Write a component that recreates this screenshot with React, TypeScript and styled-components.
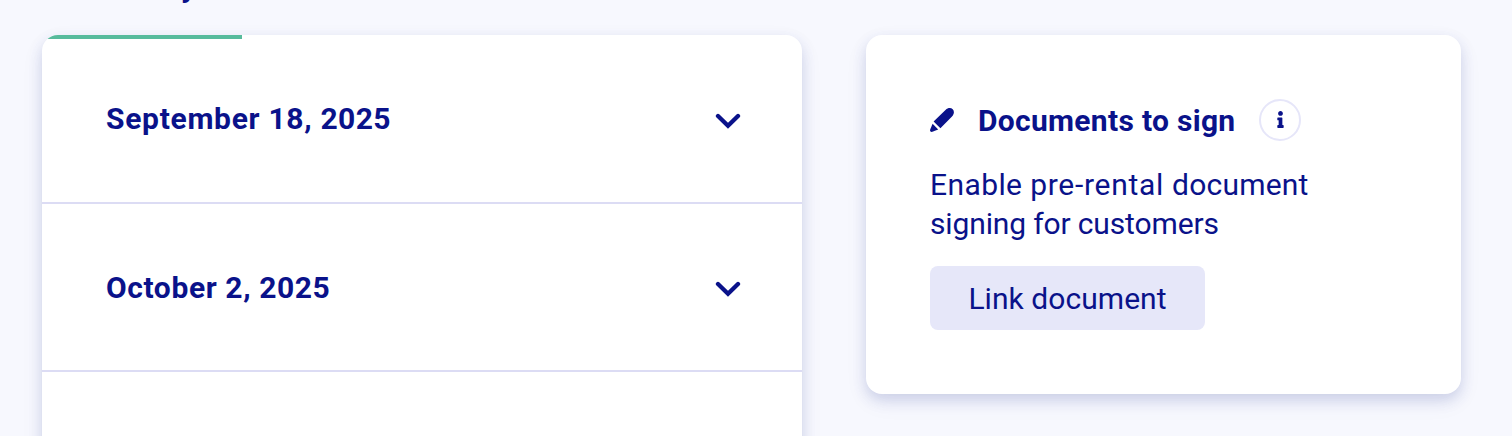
import React from "react";
import styled, { createGlobalStyle } from "styled-components";
import { FaInfo } from "react-icons/fa";

const GlobalStyle = createGlobalStyle`
  * { box-sizing: border-box; }
  html, body { margin: 0; height: 436px; overflow: hidden; background: #f7f8fe; }
  body { font-family: Roboto, "Liberation Sans", sans-serif; color: #0a128a; }
`;

const Page = styled.div`
  width: 1512px;
  height: 436px;
  overflow: hidden;
  display: flex;
  flex-direction: column;
`;

const Heading = styled.div`
  height: 35px;
  flex: none;
  padding-left: 181px;
  font-size: 30px;
  line-height: 36px;
  font-weight: 700;
  margin-top: -31px;
  margin-bottom: 31px;
`;

const Columns = styled.main`
  display: flex;
  align-items: flex-start;
  gap: 64px;
  padding-left: 42px;
`;

const Card = styled.section`
  background: #fff;
  border-radius: 16px;
  box-shadow: 0 8px 24px rgba(10, 18, 138, 0.06), 0 6px 14px rgba(50, 70, 150, 0.17);
`;

const DatesCard = styled(Card)`
  width: 760px;
  height: 560px;
`;

const ProgressClip = styled.div`
  height: 16px;
  margin-bottom: -16px;
  border-radius: 16px 16px 0 0;
  overflow: hidden;
`;

const ProgressBar = styled.div`
  width: 200px;
  height: 4px;
  background: #57bb9c;
`;

const DateRow = styled.div<{ $height: number }>`
  height: ${(p) => p.$height}px;
  display: flex;
  align-items: center;
  justify-content: space-between;
  padding: 0 61px 0 64px;
  border-bottom: 2px solid #dcdcf4;
`;

const Label = styled.span<{ $spacing?: number; $bold?: boolean }>`
  font-size: 30px;
  line-height: 39px;
  white-space: nowrap;
  font-weight: ${(p) => (p.$bold ? 700 : 400)};
  letter-spacing: ${(p) => p.$spacing ?? 0}px;
`;

const Word = styled.span<{ $spacing: number }>`
  letter-spacing: ${(p) => p.$spacing}px;
`;

const SignCard = styled(Card)`
  width: 595px;
  height: 359px;
  padding: 64px;
`;

const SignHeader = styled.header`
  height: 42px;
  display: flex;
  align-items: center;
`;

const TitleBox = styled.div`
  width: 257px;
  margin: 0 24px;
  display: flex;
`;

const InfoButton = styled.button`
  width: 42px;
  height: 42px;
  padding: 0 0 2px;
  display: flex;
  align-items: center;
  justify-content: center;
  border: 2px solid #e6e6f9;
  border-radius: 50%;
  background: #fff;
  color: #0a128a;
`;

const Description = styled.div`
  margin-top: 24px;
  display: flex;
  flex-direction: column;
`;

const LinkButton = styled.button`
  width: 275px;
  height: 64px;
  margin-top: 23px;
  padding: 0;
  border: 0;
  border-radius: 8px;
  background: #e6e7f9;
  color: inherit;
  font-family: inherit;
`;

const ChevronIcon = styled.svg`
  margin-top: 4px;
`;

const Chevron = () => (
  <ChevronIcon width="26" height="16" viewBox="0 0 26 16" fill="none">
    <path
      d="M3 3 L13 12.8 L23 3"
      stroke="#0a128a"
      strokeWidth="4.3"
      strokeLinecap="round"
    />
  </ChevronIcon>
);

const Pencil = () => (
  <svg width="24" height="24" viewBox="0 0 24 24" fill="#0a128a">
    <path d="M3.6 13.6 15.5 2C18-.4 21-.4 22.7 1.3S24.4 6 22 8.5L10.4 20.2Z" />
    <path d="M2.6 15.8 8.2 21.4 2.4 23.8Q-.4 24.4.2 21.6Z" />
  </svg>
);

export default function App() {
  return (
    <>
      <GlobalStyle />
      <Page>
        <Heading>y</Heading>
        <Columns>
          <DatesCard>
            <ProgressClip>
              <ProgressBar />
            </ProgressClip>
            <DateRow $height={169}>
              <Label $bold>
                <Word $spacing={0.7}>September </Word>
                <Word $spacing={0.7}>18, </Word>
                <Word $spacing={0.4}>2025</Word>
              </Label>
              <Chevron />
            </DateRow>
            <DateRow $height={168}>
              <Label $bold $spacing={0.6}>October 2, 2025</Label>
              <Chevron />
            </DateRow>
          </DatesCard>
          <SignCard>
            <SignHeader>
              <Pencil />
              <TitleBox>
                <Label $bold $spacing={0.3}>Documents to sign</Label>
              </TitleBox>
              <InfoButton aria-label="About documents to sign">
                <FaInfo size={17} />
              </InfoButton>
            </SignHeader>
            <Description>
              <Label>
                <Word $spacing={0.4}>Enable </Word>
                <Word $spacing={0.7}>pre-rental </Word>
                <Word $spacing={0.2}>document</Word>
              </Label>
              <Label $spacing={-0.14}>signing for customers</Label>
            </Description>
            <LinkButton>
              <Label $spacing={0.05}>Link document</Label>
            </LinkButton>
          </SignCard>
        </Columns>
      </Page>
    </>
  );
}
